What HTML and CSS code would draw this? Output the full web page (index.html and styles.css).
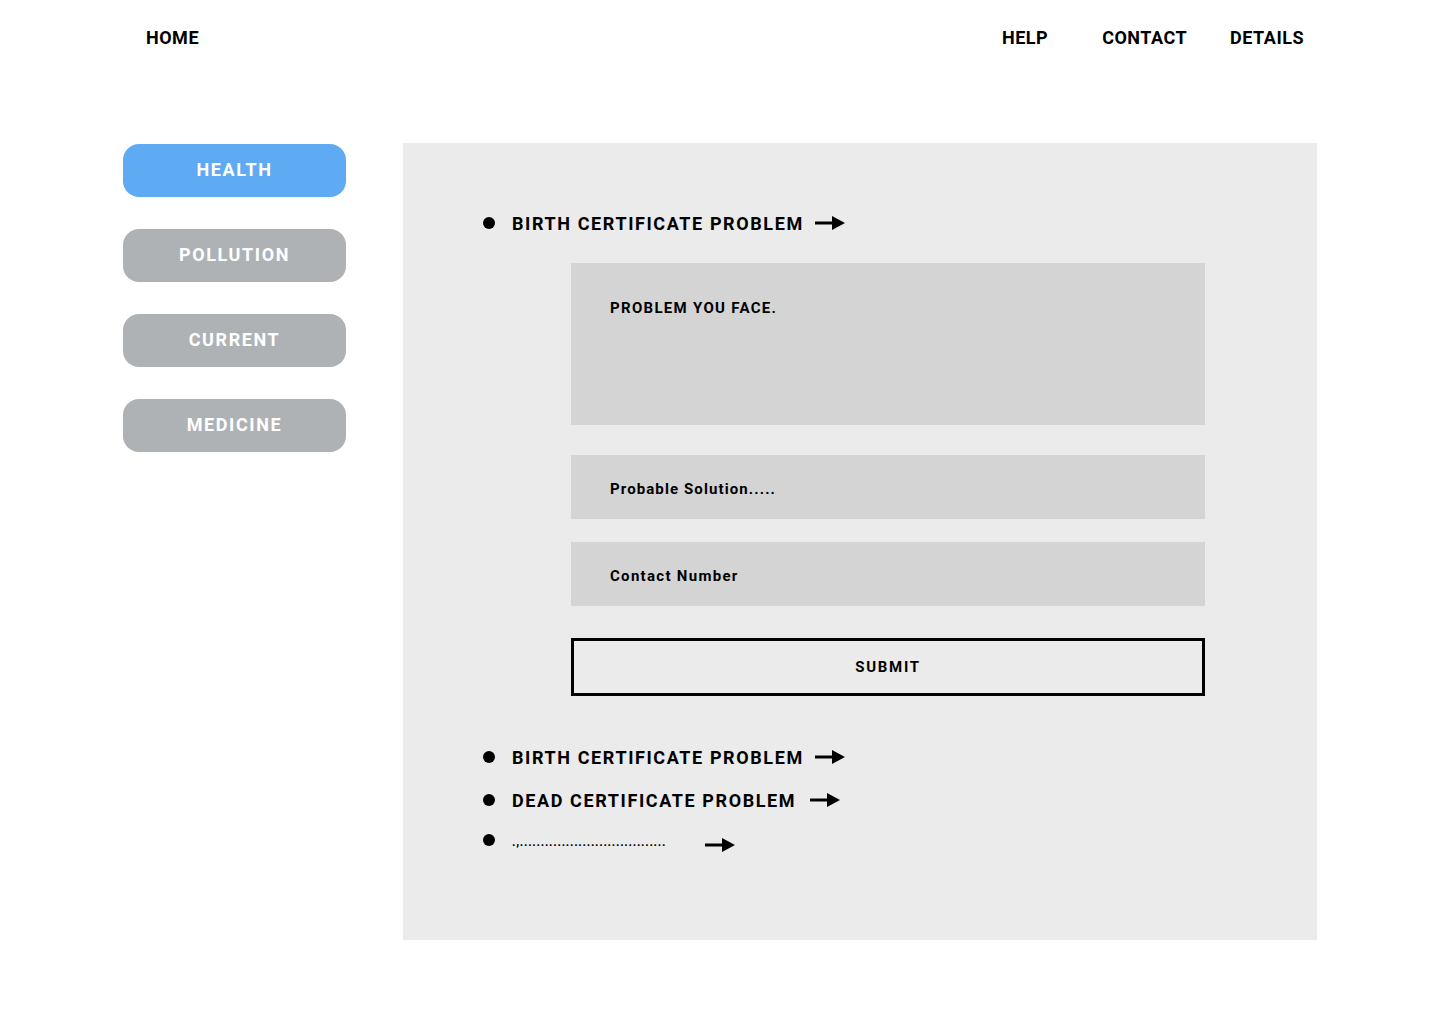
FILE: index.html
```html
<!DOCTYPE html>
<html lang="en">
<head>
<meta charset="utf-8">
<title>Complaint Form</title>
<link rel="stylesheet" href="styles.css">
</head>
<body>
<header class="topbar">
  <a class="nav-link home" href="#">HOME</a>
  <nav class="nav-right">
    <a class="nav-link help" href="#">HELP</a>
    <a class="nav-link contact" href="#">CONTACT</a>
    <a class="nav-link details" href="#">DETAILS</a>
  </nav>
</header>

<main class="layout">
  <aside class="sidebar">
    <button class="side-btn active">HEALTH</button>
    <button class="side-btn">POLLUTION</button>
    <button class="side-btn">CURRENT</button>
    <button class="side-btn">MEDICINE</button>
  </aside>

  <section class="panel">
    <div class="item">
      <span class="dot"></span>
      <span class="item-text">BIRTH CERTIFICATE PROBLEM</span>
      <svg class="arrow" width="30" height="16" viewBox="0 0 30 16"><path d="M0 8H20" stroke="#000" stroke-width="3"/><polygon points="17,1 30,8 17,15" fill="#000"/></svg>
    </div>

    <form class="form">
      <div class="field area">PROBLEM YOU FACE.</div>
      <div class="field input first">Probable Solution.....</div>
      <div class="field input">Contact Number</div>
      <button type="button" class="submit">SUBMIT</button>
    </form>

    <div class="list">
      <div class="item">
        <span class="dot"></span>
        <span class="item-text">BIRTH CERTIFICATE PROBLEM</span>
        <svg class="arrow" width="30" height="16" viewBox="0 0 30 16"><path d="M0 8H20" stroke="#000" stroke-width="3"/><polygon points="17,1 30,8 17,15" fill="#000"/></svg>
      </div>
      <div class="item">
        <span class="dot"></span>
        <span class="item-text">DEAD CERTIFICATE PROBLEM</span>
        <svg class="arrow wide" width="30" height="16" viewBox="0 0 30 16"><path d="M0 8H20" stroke="#000" stroke-width="3"/><polygon points="17,1 30,8 17,15" fill="#000"/></svg>
      </div>
      <div class="item last">
        <span class="dot"></span>
        <span class="item-dots">.,...................................</span>
        <svg class="arrow far" width="30" height="16" viewBox="0 0 30 16"><path d="M0 8H20" stroke="#000" stroke-width="3"/><polygon points="17,1 30,8 17,15" fill="#000"/></svg>
      </div>
    </div>
  </section>
</main>
</body>
</html>
```

FILE: styles.css
```css
* { box-sizing: border-box; }

body {
  margin: 0;
  background: #ffffff;
  font-family: Roboto, "Liberation Sans", Arial, sans-serif;
  color: #000;
}

.topbar {
  height: 75px;
  display: flex;
  align-items: center;
  justify-content: space-between;
  padding: 0 136px 0 146px;
}

.nav-link {
  font-family: Roboto, "Liberation Sans", sans-serif;
  font-weight: 700;
  font-size: 18px;
  color: #000;
  text-decoration: none;
  letter-spacing: 0.5px;
}

.nav-right {
  display: flex;
  align-items: center;
}

.contact { margin-left: 54px; }
.details { margin-left: 43px; }

.layout {
  display: flex;
  align-items: flex-start;
  padding: 68px 0 0 123px;
}

.sidebar {
  width: 223px;
  display: flex;
  flex-direction: column;
  gap: 32px;
  padding-top: 1px;
}

.side-btn {
  height: 53px;
  width: 223px;
  border: none;
  border-radius: 16px;
  background: #aeb2b5;
  color: #ffffff;
  font-family: Roboto, "Liberation Sans", sans-serif;
  font-weight: 700;
  font-size: 18px;
  letter-spacing: 1.6px;
  padding: 0 0 2px 0;
  cursor: pointer;
}

.side-btn.active {
  background: #5eabf4;
}

.panel {
  margin-left: 57px;
  width: 914px;
  height: 797px;
  background: #ebebeb;
  padding: 68px 0 0 80px;
}

.item {
  display: flex;
  align-items: center;
  height: 24px;
}

.dot {
  width: 12px;
  height: 12px;
  border-radius: 50%;
  background: #000;
  flex: none;
}

.item-text {
  margin-left: 17px;
  font-weight: 700;
  font-size: 18px;
  letter-spacing: 1.6px;
  white-space: nowrap;
}

.arrow {
  margin-left: 11px;
  flex: none;
}

.arrow.wide { margin-left: 14px; }

.form {
  margin: 28px 0 0 88px;
  width: 634px;
  display: flex;
  flex-direction: column;
}

.field {
  background: #d4d4d4;
  font-weight: 700;
  font-size: 15px;
  padding-left: 39px;
  letter-spacing: 1.3px;
}

.area {
  height: 162px;
  padding-top: 36px;
}

.input {
  height: 64px;
  display: flex;
  align-items: center;
  padding-top: 3px;
  margin-top: 23px;
}

.input.first { margin-top: 30px; letter-spacing: 1.1px; }

.submit {
  margin-top: 32px;
  height: 58px;
  width: 634px;
  background: transparent;
  border: 3px solid #000;
  font-family: Roboto, "Liberation Sans", sans-serif;
  font-weight: 700;
  font-size: 15px;
  letter-spacing: 1.7px;
  color: #000;
}

.list {
  margin-top: 49px;
  display: flex;
  flex-direction: column;
  gap: 19px;
}

.item.last {
  align-items: flex-start;
  height: 30px;
  margin-top: -1px;
}

.item.last .dot { margin-top: 4px; }

.item-dots {
  margin-left: 17px;
  width: 150px;
  flex: none;
  font-weight: 700;
  font-size: 12px;
  letter-spacing: 0.7px;
  line-height: 14px;
  margin-top: 5px;
  white-space: nowrap;
}

.arrow.far {
  margin-left: 43px;
  margin-top: 7px;
}
```
